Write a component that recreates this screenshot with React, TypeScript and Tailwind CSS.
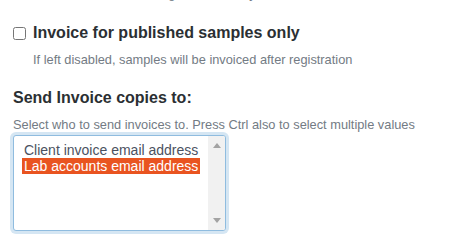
import React, { useState } from "react";

const options = ["Client invoice email address", "Lab accounts email address"];

const App: React.FC = () => {
  const [publishedOnly, setPublishedOnly] = useState(false);
  const [selected, setSelected] = useState<string[]>(["Lab accounts email address"]);

  return (
    <div
      className="w-[456px] h-[244px] overflow-hidden bg-white"
      style={{ fontFamily: '"Liberation Sans", Arial, sans-serif' }}
    >
      <div className="px-[13px]">
        <p className="-mt-[15px] pl-[20px] text-[12.8px] leading-[18px] text-[#737b84]">
          When set the invoice is generated daily
        </p>

        <div className="mt-[20px] flex items-start gap-[7px]">
          <input
            type="checkbox"
            checked={publishedOnly}
            onChange={(e) => setPublishedOnly(e.target.checked)}
            className="mt-[4px] w-[13px] h-[13px] m-0"
          />
          <div>
            <label className="block text-[16px] leading-[20px] font-bold text-[#2b2f33]">
              Invoice for published samples only
            </label>
            <p className="mt-[8px] text-[12.8px] leading-[18px] text-[#737b84]">
              If left disabled, samples will be invoiced after registration
            </p>
          </div>
        </div>

        <h3 className="mt-[19px] text-[16px] leading-[20px] font-bold text-[#2b2f33]">
          Send Invoice copies to:
        </h3>
        <p className="mt-[8px] text-[12.8px] leading-[18px] text-[#737b84]">
          Select who to send invoices to. Press Ctrl also to select multiple values
        </p>

        <div className="mt-[1px] w-[213px] h-[96px] flex border border-[#8fbcdf] rounded-[3px] shadow-[0_0_0_3px_#d5e6f3] bg-white overflow-hidden">
          <ul className="flex-1 pl-[8px] pt-[6px] text-[14px] leading-[16px]">
            {options.map((opt) => {
              const on = selected.includes(opt);
              return (
                <li
                  key={opt}
                  onClick={() =>
                    setSelected((s) => (s.includes(opt) ? s.filter((x) => x !== opt) : [...s, opt]))
                  }
                  className={
                    on
                      ? "w-fit px-[2px] bg-[#e95420] text-white cursor-default"
                      : "w-fit px-[2px] text-[#4b5261] cursor-default"
                  }
                >
                  {opt}
                </li>
              );
            })}
          </ul>
          <div className="w-[17px] bg-[#f1f1f1] flex flex-col justify-between items-center py-[7px]">
            <svg width="8" height="5" viewBox="0 0 8 5">
              <path d="M4 0 L8 5 L0 5 Z" fill="#a3a3a3" />
            </svg>
            <svg width="8" height="5" viewBox="0 0 8 5">
              <path d="M0 0 L8 0 L4 5 Z" fill="#a3a3a3" />
            </svg>
          </div>
        </div>
      </div>
    </div>
  );
};

export default App;
